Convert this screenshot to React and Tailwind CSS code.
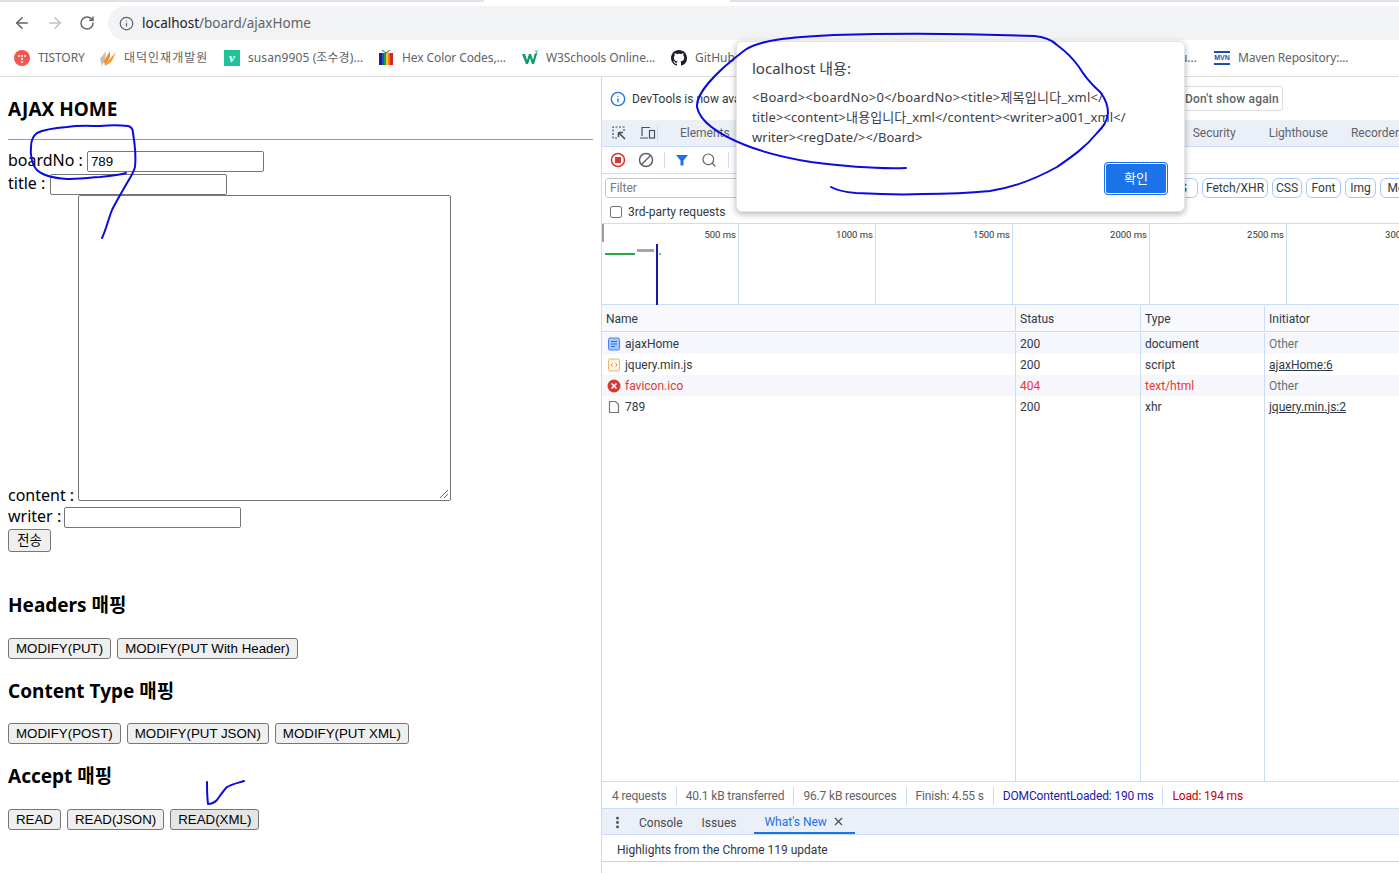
import React from "react";
import { ArrowLeft, ArrowRight, RotateCw, Info, X, Search, EllipsisVertical } from "lucide-react";

const uiFont = "font-['Noto_Sans','Noto_Sans_CJK_KR',sans-serif]";
const toolFont = "font-['Roboto','Noto_Sans_CJK_KR',sans-serif]";
const formFont = "font-['Liberation_Sans','Noto_Sans_CJK_KR',sans-serif]";

function Bookmark({ icon, label, className, labelClass }) {
  return (
    <div className={`flex items-center gap-2 text-xs text-[#5f6368] shrink-0 ${className}`}>
      <span className="flex w-4 h-4 items-center justify-center shrink-0">{icon}</span>
      <span className={labelClass}>{label}</span>
    </div>
  );
}

function BrowserBar() {
  return (
    <div className="flex flex-col shrink-0 h-[77px] border-b border-[#dadce0]">
      <div className="flex h-[6px] items-start">
        <div className="w-[484px] h-[2px] bg-[#dee1e6] rounded-br" />
        <div className="w-[246px]" />
        <div className="flex-1 h-[2px] bg-[#dee1e6]" />
      </div>
      <div className="flex items-center h-[34px]">
        <div className="flex items-center w-[108px] pl-[13px] gap-[15px] shrink-0">
          <ArrowLeft size={18} className="text-[#5f6368]" />
          <ArrowRight size={18} className="text-[#bdc1c6]" />
          <RotateCw size={16} strokeWidth={2.2} className="text-[#5f6368]" />
        </div>
        <div className="flex flex-1 items-center h-[34px] bg-[#f1f3f4] rounded-l-full pl-[11px] gap-[8px] text-[13.5px]">
          <Info size={15} className="text-[#5f6368]" />
          <span className="text-[#202124]">
            localhost<span className="text-[#5f6368]">/board/ajaxHome</span>
          </span>
        </div>
      </div>
      <div className="flex items-center flex-1 pl-[14px] overflow-hidden">
        <Bookmark
          className="w-[86px]"
          labelClass="tracking-[-0.1px]"
          label="TISTORY"
          icon={
            <svg width="16" height="16" viewBox="0 0 16 16">
              <circle cx="8" cy="8" r="8" fill="#f4574b" />
              <circle cx="5" cy="6" r="1" fill="#fff" />
              <circle cx="8" cy="6" r="1" fill="#fff" />
              <circle cx="11" cy="6" r="1" fill="#fff" />
              <circle cx="8" cy="9" r="1" fill="#fff" />
              <circle cx="8" cy="12" r="1" fill="#fff" />
            </svg>
          }
        />
        <Bookmark
          className="w-[124px]"
          labelClass="tracking-[1px]"
          label="대덕인재개발원"
          icon={
            <svg width="16" height="16" viewBox="0 0 16 16">
              <path d="M0 9 L6 1 L5 10 L2 16 Z" fill="#c4bdb3" />
              <path d="M4 11 L10 1 L10 7 L5 16 Z" fill="#f28a30" />
              <path d="M7 12 L16 2 L12 11 L6 16 Z" fill="#f5a02a" />
            </svg>
          }
        />
        <Bookmark
          className="w-[154px]"
          labelClass="tracking-[0.1px]"
          label="susan9905 (조수경)..."
          icon={
            <span className="flex w-4 h-4 items-center justify-center bg-[#1fc29a] font-['Liberation_Serif',serif] italic font-bold text-white text-[13px]">
              v
            </span>
          }
        />
        <Bookmark
          className="w-[144px]"
          labelClass="tracking-[-0.1px]"
          label="Hex Color Codes,..."
          icon={
            <svg width="16" height="16" viewBox="0 0 16 16">
              <rect x="1" y="3" width="3" height="12" fill="#2a1a8a" />
              <rect x="4" y="3" width="2" height="12" fill="#1456c8" />
              <rect x="6" y="3" width="2" height="12" fill="#12a150" />
              <rect x="8" y="3" width="2" height="12" fill="#f2c81e" />
              <rect x="10" y="3" width="2" height="12" fill="#f07a1a" />
              <rect x="12" y="3" width="3" height="12" fill="#d8261c" />
              <path d="M4 0 L8 3 L12 0" stroke="#444" strokeWidth="1" fill="none" />
            </svg>
          }
        />
        <Bookmark
          className="w-[149px]"
          labelClass="tracking-[-0.1px]"
          label="W3Schools Online..."
          icon={
            <svg width="16" height="16" viewBox="0 0 16 16">
              <path d="M0 4 L3 4 L5 10 L7 4 L9 4 L11 10 L12.5 4 L15 4 L12 14 L10 14 L8 8 L6 14 L4 14 Z" fill="#0d9a6c" />
              <path d="M13 1 H15.5 L14.5 2.5 L15.5 3.5 H13" stroke="#0d9a6c" strokeWidth="0.7" fill="none" />
            </svg>
          }
        />
        <Bookmark
          className="w-[80px]"
          label="GitHub"
          icon={
            <svg width="16" height="16" viewBox="0 0 16 16" fill="#1b1f23">
              <path d="M8 0C3.58 0 0 3.58 0 8c0 3.54 2.29 6.53 5.47 7.59.4.07.55-.17.55-.38 0-.19-.01-.82-.01-1.49-2.01.37-2.53-.49-2.69-.94-.09-.23-.48-.94-.82-1.13-.28-.15-.68-.52-.01-.53.63-.01 1.08.58 1.23.82.72 1.21 1.87.87 2.33.66.07-.52.28-.87.51-1.07-1.78-.2-3.64-.89-3.64-3.95 0-.87.31-1.59.82-2.15-.08-.2-.36-1.02.08-2.12 0 0 .67-.21 2.2.82.64-.18 1.32-.27 2-.27s1.36.09 2 .27c1.53-1.04 2.2-.82 2.2-.82.44 1.1.16 1.92.08 2.12.51.56.82 1.27.82 2.15 0 3.07-1.87 3.75-3.65 3.95.29.25.54.73.54 1.48 0 1.07-.01 1.93-.01 2.2 0 .21.15.46.55.38A8.01 8.01 0 0 0 16 8c0-4.42-3.58-8-8-8z" />
            </svg>
          }
        />
        <div className="w-[463px] shrink-0 text-xs text-[#5f6368] text-right pr-[17px]">u...</div>
        <Bookmark
          labelClass="tracking-[-0.2px]"
          label="Maven Repository:..."
          icon={
            <span className="flex w-4 h-[14px] items-center justify-center border-y-2 border-[#1b4fb0] font-['Liberation_Sans',sans-serif] font-bold text-[7px] text-[#1b4fb0]">
              MVN
            </span>
          }
        />
      </div>
    </div>
  );
}

function Field({ label, children, className, labelClass }) {
  return (
    <div className={`flex items-end text-base text-black ${className}`}>
      <span className={labelClass}>{label}</span>
      {children}
    </div>
  );
}

function TextBox({ value }) {
  return (
    <input
      readOnly
      value={value}
      className={`w-[177px] h-[21px] px-[3px] border border-[#767676] rounded-[2px] text-[13.33px] text-black outline-none ${formFont}`}
    />
  );
}

function PageButton({ children, active }) {
  return (
    <button
      className={`h-[21px] px-[7px] border border-[#767676] rounded-[3px] text-[13.3px] leading-none text-black ${
        active ? "bg-[#e5e5e5] border-[#4f4f4f]" : "bg-[#efefef]"
      } ${formFont}`}
    >
      {children}
    </button>
  );
}

function ButtonGroup({ children, className }) {
  return <div className={`flex gap-[6px] ${className}`}>{children}</div>;
}

function PagePane() {
  const heading = "text-[19px] leading-[27px] font-bold text-black";
  return (
    <div className="flex flex-col w-[601px] shrink-0 pl-2 pr-2">
      <h2 className={`mt-[19px] ${heading}`}>AJAX HOME</h2>
      <div className="mt-[16px] h-[1px] w-[585px] bg-[#9a9a9a]" />
      <Field label="boardNo :" labelClass="mr-[4px] mb-[2px] leading-[19px]" className="mt-[11px]">
        <TextBox value="789" />
      </Field>
      <Field label="title :" labelClass="mr-[5px] mb-[2px] leading-[19px]" className="mt-[2px]">
        <TextBox value="" />
      </Field>
      <Field label="content :" labelClass="mr-[4px] mb-[-5px] leading-[21px]">
        <div className="relative w-[373px] h-[306px] border border-[#767676] rounded-[2px]">
          <svg className="absolute right-[1px] bottom-[1px]" width="10" height="10" viewBox="0 0 10 10">
            <path d="M1 9 L9 1 M5 9 L9 5" stroke="#666" strokeWidth="1" />
          </svg>
        </div>
      </Field>
      <Field label="writer :" labelClass="mr-[3px] mb-[2px] leading-[19px]" className="mt-[6px]">
        <TextBox value="" />
      </Field>
      <div className="flex mt-[1px]">
        <button className="w-[43px] h-[23px] border border-[#767676] rounded-[3px] bg-[#efefef] text-[13.33px] text-black">
          전송
        </button>
      </div>
      <h3 className={`mt-[40px] ${heading}`}>Headers 매핑</h3>
      <ButtonGroup className="mt-[19px]">
        <PageButton>MODIFY(PUT)</PageButton>
        <PageButton>MODIFY(PUT With Header)</PageButton>
      </ButtonGroup>
      <h3 className={`mt-[19px] ${heading}`}>Content Type 매핑</h3>
      <ButtonGroup className="mt-[18px]">
        <PageButton>MODIFY(POST)</PageButton>
        <PageButton>MODIFY(PUT JSON)</PageButton>
        <PageButton>MODIFY(PUT XML)</PageButton>
      </ButtonGroup>
      <h3 className={`mt-[19px] ${heading}`}>Accept 매핑</h3>
      <ButtonGroup className="mt-[19px]">
        <PageButton>READ</PageButton>
        <PageButton>READ(JSON)</PageButton>
        <PageButton active>READ(XML)</PageButton>
      </ButtonGroup>
    </div>
  );
}

function FilterPill({ children, className }) {
  return (
    <span className={`flex items-center justify-center h-[20px] rounded-[6px] border border-[#a8c7fa] bg-white text-xs text-[#303942] shrink-0 ${className}`}>
      {children}
    </span>
  );
}

function Tick({ label, className }) {
  return (
    <div className={`h-full pt-[5px] pr-[2px] border-r border-[#cbdcf5] text-right text-[9.5px] leading-[12px] text-[#333] shrink-0 ${className}`}>
      {label}
    </div>
  );
}

function FileIcon({ kind }) {
  if (kind === "doc") {
    return (
      <svg width="14" height="14" viewBox="0 0 14 14">
        <rect x="1.5" y="1" width="11" height="12" rx="1.5" fill="#a8c7fa" stroke="#4285f4" strokeWidth="1" />
        <path d="M4 4.5h6M4 7h6M4 9.5h4" stroke="#1a73e8" strokeWidth="1" />
      </svg>
    );
  }
  if (kind === "script") {
    return (
      <svg width="14" height="14" viewBox="0 0 14 14">
        <rect x="1.5" y="1" width="11" height="12" rx="1.5" fill="#fdf3e4" stroke="#f2b368" strokeWidth="1" />
        <path d="M5.5 5.5 L4 7 L5.5 8.5 M8.5 5.5 L10 7 L8.5 8.5" stroke="#e8912d" strokeWidth="1" fill="none" />
      </svg>
    );
  }
  if (kind === "error") {
    return (
      <svg width="14" height="14" viewBox="0 0 14 14">
        <circle cx="7" cy="7" r="6.5" fill="#dc362e" />
        <path d="M4.5 4.5 L9.5 9.5 M9.5 4.5 L4.5 9.5" stroke="#fff" strokeWidth="1.6" />
      </svg>
    );
  }
  return (
    <svg width="14" height="14" viewBox="0 0 14 14">
      <path d="M2.5 1.5 H8.5 L11.5 4.5 V12.5 H2.5 Z" fill="#fff" stroke="#757575" strokeWidth="1.2" />
    </svg>
  );
}

const requests = [
  { name: "ajaxHome", status: "200", type: "document", initiator: "Other", icon: "doc", bg: "bg-[#f5f7fd]" },
  { name: "jquery.min.js", status: "200", type: "script", initiator: "ajaxHome:6", link: true, icon: "script", bg: "bg-white" },
  { name: "favicon.ico", status: "404", type: "text/html", initiator: "Other", icon: "error", bg: "bg-[#f5f7fd]", error: true },
  { name: "789", status: "200", type: "xhr", initiator: "jquery.min.js:2", link: true, icon: "file", bg: "bg-white" },
];

function NetworkTable() {
  const cell = "h-full pl-[4px] flex items-center border-r border-[#cbdcf5] shrink-0";
  return (
    <div className="flex flex-col flex-1 min-h-0 relative">
      <div className="flex h-[27px] pt-[1px] bg-[#f8f9fd] border-b border-[#cbdcf5] text-xs text-[#303942] shrink-0">
        <div className={`${cell} w-[414px]`}>Name</div>
        <div className={`${cell} w-[125px]`}>Status</div>
        <div className={`${cell} w-[124px]`}>Type</div>
        <div className="pl-[4px] flex items-center">Initiator</div>
      </div>
      <div className="h-[1px] shrink-0" />
      {requests.map((r) => (
        <div key={r.name} className={`flex h-[21px] text-xs shrink-0 ${r.bg} ${r.error ? "text-[#e53935]" : "text-[#303942]"}`}>
          <div className={`${cell} w-[414px] gap-[4px] pl-[5px]`}>
            <FileIcon kind={r.icon} />
            {r.name}
          </div>
          <div className={`${cell} w-[125px]`}>{r.status}</div>
          <div className={`${cell} w-[124px]`}>{r.type}</div>
          <div className={`pl-[4px] flex items-center ${r.link ? "underline" : "text-[#6b7075]"}`}>{r.initiator}</div>
        </div>
      ))}
      <div className="flex flex-1">
        <div className="w-[414px] border-r border-[#cbdcf5]" />
        <div className="w-[125px] border-r border-[#cbdcf5]" />
        <div className="w-[124px] border-r border-[#cbdcf5]" />
      </div>
    </div>
  );
}

function SummaryItem({ children, className }) {
  return <span className={`px-[9px] border-r border-[#cbdcf5] leading-[18px] ${className}`}>{children}</span>;
}

function DevTools() {
  return (
    <div className={`flex flex-col flex-1 min-w-0 border-l border-[#cbdcf5] text-[#303942] overflow-hidden ${toolFont}`}>
      <div className="flex items-center h-[43px] shrink-0 pl-[8px]">
        <Info size={16} className="text-[#1a73e8] mr-[6px]" />
        <span className="text-xs w-[300px]">DevTools is now available in Korean</span>
        <div className="ml-[249px] flex items-center h-[25px] w-[102px] justify-center border border-[#dadce0] rounded-[3px] text-xs tracking-[0.2px] font-medium text-[#5f6368]">
          Don't show again
        </div>
      </div>
      <div className="flex items-center h-[27px] bg-[#ebeff8] border-b border-[#cbdcf5] text-xs text-[#5f6368] shrink-0">
        <div className="flex items-center pl-[9px] gap-[12px] w-[62px]">
          <svg width="16" height="16" viewBox="0 0 16 16" fill="none" stroke="#4a4f55" strokeWidth="1.2">
            <path d="M6 13 H2 V2 H13 V6" strokeDasharray="2 1.5" />
            <path d="M7.5 7.5 L14 14 M7.5 7.5 H12 M7.5 7.5 V12" strokeWidth="1.6" />
          </svg>
          <svg width="17" height="16" viewBox="0 0 17 16" fill="none" stroke="#4a4f55" strokeWidth="1.2">
            <path d="M3 11 V2.5 H11 M1 13 H9" />
            <rect x="10.5" y="5.5" width="5" height="7.5" />
          </svg>
        </div>
        <div className="w-[1px] h-[16px] bg-[#cbdcf5]" />
        <span className="ml-[22px]">Elements</span>
        <span className="ml-[463px]">Security</span>
        <span className="ml-[33px]">Lighthouse</span>
        <span className="ml-[23px] whitespace-nowrap">Recorder</span>
      </div>
      <div className="flex items-center h-[27px] border-b border-[#cbdcf5] pl-[8px] shrink-0">
        <svg width="16" height="16" viewBox="0 0 16 16">
          <circle cx="8" cy="8" r="6.5" fill="none" stroke="#dc362e" strokeWidth="1.5" />
          <rect x="5" y="5" width="6" height="6" fill="#dc362e" />
        </svg>
        <svg className="ml-[12px]" width="16" height="16" viewBox="0 0 16 16" fill="none" stroke="#5f6368" strokeWidth="1.5">
          <circle cx="8" cy="8" r="6.5" />
          <path d="M3.5 12.5 L12.5 3.5" />
        </svg>
        <div className="w-[1px] h-[16px] bg-[#cbdcf5] ml-[10px]" />
        <svg className="ml-[9px]" width="16" height="16" viewBox="0 0 16 16">
          <path d="M2 3 H14 L9.5 8.5 V13.5 H6.5 V8.5 Z" fill="#1a73e8" />
        </svg>
        <Search size={16} strokeWidth={1.8} className="text-[#5f6368] ml-[11px]" />
        <div className="w-[1px] h-[16px] bg-[#cbdcf5] ml-[11px]" />
      </div>
      <div className="flex items-center h-[27px] pl-[3px] shrink-0">
        <div className="flex items-center w-[550px] h-[20px] px-[4px] border border-[#c4c7cc] rounded-[3px] text-xs text-[#777] shrink-0">
          Filter
        </div>
        <div className="ml-[7px] flex items-center gap-[4px]">
          <FilterPill className="w-[36px]">JS</FilterPill>
          <FilterPill className="w-[66px]">Fetch/XHR</FilterPill>
          <FilterPill className="w-[30px]">CSS</FilterPill>
          <FilterPill className="w-[35px]">Font</FilterPill>
          <FilterPill className="w-[31px]">Img</FilterPill>
          <FilterPill className="w-[48px]">Media</FilterPill>
        </div>
      </div>
      <div className="flex items-center h-[23px] pl-[8px] gap-[6px] border-b border-[#cbdcf5] text-xs shrink-0">
        <span className="w-[12px] h-[12px] border border-[#767676] rounded-[2px] bg-white" />
        3rd-party requests
      </div>
      <div className="relative flex h-[81px] border-b border-[#cbdcf5] shrink-0">
        <Tick className="w-[137px]" label="500 ms" />
        <Tick className="w-[137px]" label="1000 ms" />
        <Tick className="w-[137px]" label="1500 ms" />
        <Tick className="w-[137px]" label="2000 ms" />
        <Tick className="w-[137px]" label="2500 ms" />
        <Tick className="w-[137px] !border-r-0" label="3000 ms" />
        <svg className="absolute left-0 top-0" width="70" height="81">
          <rect x="0" y="0" width="2" height="18" fill="#9aa0a6" />
          <rect x="3" y="29" width="30" height="2" fill="#28a745" />
          <rect x="35" y="25" width="17" height="3" fill="#a6a6a6" />
          <rect x="57" y="29" width="2" height="2" fill="#4fc3a1" />
          <rect x="54" y="20" width="2" height="61" fill="#1a1aa8" />
        </svg>
      </div>
      <NetworkTable />
      <div className="flex items-center h-[27px] pt-[2px] border-t border-[#cbdcf5] text-xs tracking-[-0.15px] text-[#5f6368] shrink-0 whitespace-nowrap">
        <SummaryItem className="pl-[10px]">4 requests</SummaryItem>
        <SummaryItem>40.1 kB transferred</SummaryItem>
        <SummaryItem>96.7 kB resources</SummaryItem>
        <SummaryItem>Finish: 4.55 s</SummaryItem>
        <SummaryItem className="text-[#1a1aa6]">DOMContentLoaded: 190 ms</SummaryItem>
        <span className="px-[9px] text-[#c80000]">Load: 194 ms</span>
      </div>
      <div className="flex items-center h-[27px] pt-[2px] bg-[#ebeff8] border-y border-[#cbdcf5] text-xs text-[#45494e] shrink-0">
        <EllipsisVertical size={15} strokeWidth={2.5} className="ml-[8px] text-[#45494e]" />
        <span className="ml-[14px]">Console</span>
        <span className="ml-[19px]">Issues</span>
        <div className="flex items-center h-full ml-[18px] px-[10px] gap-[5px] border-b-2 border-[#1a73e8] text-[#1a73e8]">
          What's New
          <X size={13} className="text-[#45494e]" />
        </div>
      </div>
      <div className="flex items-center h-[27px] pt-[3px] pl-[15px] border-b border-[#d0d0d0] text-xs text-[#303942] shrink-0">
        Highlights from the Chrome 119 update
      </div>
      <div className="h-[11px] shrink-0" />
    </div>
  );
}

function AlertDialog() {
  return (
    <div className="absolute left-[736px] top-[41px] w-[449px] h-[171px] flex flex-col bg-white rounded-md border border-[#e4e4e4] shadow-[0_2px_6px_rgba(0,0,0,0.3)] pl-[15px] pr-[16px]">
      <div className="mt-[15px] text-[15px] leading-[22px] text-[#3c4043]">localhost 내용:</div>
      <div className="mt-[8px] text-[13px] leading-[20px] text-[#3c4043] whitespace-nowrap">
        <div className="tracking-[0.25px]">{"<Board><boardNo>0</boardNo><title>제목입니다_xml</"}</div>
        <div className="tracking-[0.1px]">{"title><content>내용입니다_xml</content><writer>a001_xml</"}</div>
        <div className="tracking-[0.05px]">{"writer><regDate/></Board>"}</div>
      </div>
      <div className="flex justify-end mt-auto mb-[16px]">
        <button className="w-[64px] h-[33px] rounded-[4px] bg-[#1a73e8] border border-[#1a73e8] outline outline-1 outline-offset-[-2px] outline-white text-[13px] text-white">
          확인
        </button>
      </div>
    </div>
  );
}

function PenStrokes() {
  const pen = { fill: "none", stroke: "#0b0be0", strokeWidth: 2, strokeLinecap: "round", strokeLinejoin: "round" };
  return (
    <svg className="absolute inset-0 pointer-events-none" width="1399" height="873" viewBox="0 0 1399 873">
      <path
        {...pen}
        d="M906 168 C880 169 850 167 811 162 C780 157 760 151 745 145 C720 135 700 122 697 107 C696 95 712 75 745 50 C760 40 790 37 834 35 C900 33 980 34 1034 36 C1048 37 1054 42 1057 45 C1068 53 1074 60 1079 67 C1088 82 1095 87 1101 93 C1106 100 1108 106 1108 113 C1107 122 1103 127 1097 133 C1085 148 1070 158 1057 167 C1030 182 1010 188 990 191 C960 194 945 194 923 194 C900 195 875 194 856 193 C845 192 838 191 831 187"
      />
      <path
        {...pen}
        d="M126 173 C120 175 110 176 100 177 C85 178 75 179 67 179 C52 178 42 175 37 170 C32 165 30 155 31 147 C31 140 33 136 37 133 C45 129 55 128 67 127 C80 125 90 126 100 126 C110 125 120 125 128 126 C132 127 133 130 133 133 C135 145 136 158 135 167 C133 174 130 178 127 183 C122 192 117 200 112 210 C108 220 106 230 102 238"
      />
      <path {...pen} d="M244 781 C238 783 232 784 227 787 C223 791 220 796 217 800 C214 803 211 804 208 804 C207 796 207 789 207 782" />
    </svg>
  );
}

export default function App() {
  return (
    <div className={`relative flex flex-col w-[1399px] h-[873px] overflow-hidden bg-white ${uiFont}`}>
      <BrowserBar />
      <div className="flex flex-1 min-h-0">
        <PagePane />
        <DevTools />
      </div>
      <AlertDialog />
      <PenStrokes />
    </div>
  );
}
